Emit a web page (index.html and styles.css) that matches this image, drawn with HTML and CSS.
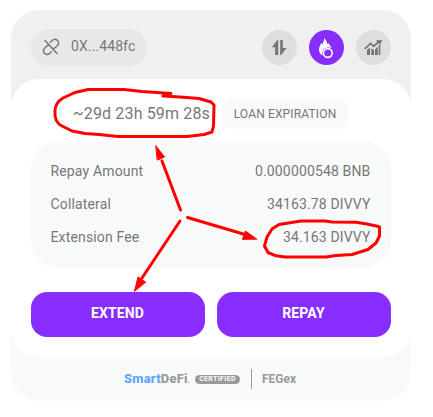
FILE: index.html
```html
<!DOCTYPE html>
<html lang="en">
<head>
<meta charset="utf-8">
<title>Loan</title>
<link rel="stylesheet" href="styles.css">
</head>
<body>
<div class="card">
  <header class="header">
    <div class="wallet">
      <svg width="18" height="18" viewBox="0 0 18 18" fill="none" stroke="#777" stroke-width="1.5" stroke-linecap="round"><path d="M3 2.5 L15 15.5"/><path d="M8.3 4.3 L10 2.7 C11.5 1.2 13.8 1 15.4 2.3 C17 3.7 16.9 6.1 15.5 7.5 L13 9.8 C12.2 10.5 11.5 10.7 10.5 10.6"/><path d="M9.4 13.7 L7.8 15.2 C6.3 16.6 4.1 16.7 2.6 15.4 C1 14 1.1 11.7 2.5 10.3 L4.8 8.1 C5.5 7.5 6.2 7.2 7.2 7.3"/></svg>
      <span>0X...448fc</span>
    </div>
    <nav class="tools">
      <a class="tool"><svg width="35" height="35" viewBox="0 0 35 35" fill="#747474"><path d="M10 17.2 L15.3 10 H16.2 V25 H13.2 V17.2Z M18.2 10 H20.8 V18 H24.5 L19.2 25 H18.2Z"/></svg></a>
      <a class="tool active"><svg width="35" height="35" viewBox="0 0 35 35" fill="#fff"><path d="M15 8 C17 10 18.2 12 18.2 14 L19.4 13.2 C20.5 14.5 21.8 16 22.4 18 C17 16 12.5 20 13.7 25.7 C11.4 24.5 10 22.3 10 19.5 C10 17 11.5 15 12.3 13 L13.3 14.3 C14.5 12 15.3 10 15 8Z"/><circle cx="18.8" cy="23" r="5.5" fill="#872eff"/><circle cx="18.8" cy="23" r="4.4" fill="none" stroke="#fff" stroke-width="1.6"/></svg></a>
      <a class="tool"><svg width="35" height="35" viewBox="0 0 35 35" fill="#747474"><path d="M11 20 L14 17.5 V25 H11Z M15.3 18.3 L18 20.3 V25 H15.3Z M19 19.5 L21.8 16.5 V25 H19Z M22.7 15.6 L24.3 14 V25 H22.7Z"/><path d="M8.8 18.8 L14.6 13.4 L17.7 16.2 L23.2 11.4" fill="none" stroke="#747474" stroke-width="1.8"/><path d="M19.8 10.2 H26.5 L24 14.6Z"/></svg></a>
    </nav>
  </header>
  <main class="panel">
    <div class="expiry"><span class="time">~29d 23h 59m 28s</span><span class="chip">LOAN EXPIRATION</span></div>
    <dl class="details">
      <div class="row"><dt>Repay Amount</dt><dd>0.000000548 BNB</dd></div>
      <div class="row"><dt>Collateral</dt><dd>34163.78 DIVVY</dd></div>
      <div class="row"><dt>Extension Fee</dt><dd>34.163 DIVVY</dd></div>
    </dl>
    <div class="actions"><button>EXTEND</button><button>REPAY</button></div>
  </main>
  <footer class="footer">
    <span class="brand"><b>Smart</b>DeFi<small>.</small></span>
    <span class="certified">CERTIFIED</span>
    <span class="divider"></span>
    <span class="fegex">FEGex</span>
  </footer>
</div>
<svg class="notes" width="433" height="417" viewBox="0 0 433 417" fill="none" stroke="#f00" stroke-width="3" stroke-linejoin="round" stroke-linecap="round">
  <path d="M171 93.500 L142 91.500 L124 89.500 H88 L75 92.500 L63 98 Q55 103 55 111 Q54 122 62 126 L72 131 L85 133.500 L99 134.500 L118 136.500 H187 L204 134.500 L212 132 L213.500 126 L214 105 L211 102 L199 98.500 L180 97 L163 96"/>
  <path d="M378.500 226.500 L367 224 L356 222.300 L332 222 L325 221 H301 L279 224.500 L272 229 L267 237 L264.500 246 L268 252.500 L276 255.800 L285 257 H326 L336 255.500 L352 254.500 L368 249.500 L376 243 L379.500 236 V227"/>
  <path d="M180.500 210 L162 161 M180 221 L142 278 M187.500 217.500 L245 234.500"/>
  <path d="M156 146 L164.500 157 L157.500 160Z M134.500 291 L138 277 L145.500 282Z M256.500 239 L245.500 231 L242.500 239Z" fill="#f00" stroke-width="1"/>
</svg>
</body>
</html>
```

FILE: styles.css
```css
* { box-sizing: border-box; }
body { margin: 0; padding: 10px 11px; background: #fff; color: #777; font-family: Roboto, sans-serif; font-size: 14px; }
.card { width: 400px; height: 391px; border-radius: 28px; overflow: hidden; background: linear-gradient(#f0f0f0 0 50%, #f8faf9 50%); }
.header { height: 69px; padding: 1px 20px 0; display: flex; align-items: center; justify-content: space-between; }
.wallet { display: flex; align-items: center; gap: 11px; width: 116px; height: 37px; margin-top: 4px; padding-left: 11px; border-radius: 18px; background: #e8e8e8; letter-spacing: .1px; }
.wallet span { padding-bottom: 2px; }
.tools { display: flex; gap: 12px; margin-top: 4px; }
.tool { width: 35px; height: 35px; border-radius: 50%; background: #dcdedf; }
.tool svg { display: block; }
.tool.active { background: #872eff; }
.panel { height: 278px; padding: 20px; border-radius: 28px; background: #fff; }
.expiry { display: flex; align-items: center; justify-content: flex-end; gap: 12px; height: 30px; padding-right: 43px; }
.time { padding-bottom: 2px; font-size: 16px; letter-spacing: .15px; }
.chip { width: 126px; height: 30px; border-radius: 10px; background: #f8faf9; font-size: 12px; line-height: 30px; text-align: center; letter-spacing: .15px; }
.details { height: 127px; margin: 12px 0 24px; padding: 13px 20.5px 15px 19.5px; border-radius: 28px; background: #f8faf9; letter-spacing: .15px; }
.row { display: flex; align-items: center; justify-content: space-between; height: 33px; }
.row dd { margin: 0; }
.actions { display: flex; gap: 12px; }
.actions button { flex: 1; height: 45px; padding: 0 1px 3px 0; border: 0; border-radius: 16px; background: #872eff; color: #fff; font: 700 14px Roboto, sans-serif; letter-spacing: .15px; }
.footer { display: flex; align-items: center; height: 44px; padding-left: 113px; color: #999; }
.brand { width: 71px; font: 800 12px Roboto, sans-serif; white-space: nowrap; letter-spacing: .2px; transform: scaleX(1.08); transform-origin: left; }
.brand b { color: #5da3f8; font-weight: 800; }
.brand small { font-size: 7px; }
.certified { width: 45px; height: 9px; border-radius: 5px; background: #999; color: #fff; font: 700 7px/9px Roboto, sans-serif; text-align: center; letter-spacing: .35px; }
.divider { width: 1px; height: 20px; margin: 0 10px 0 11px; background: #999; }
.fegex { font-size: 12px; font-weight: 700; }
.notes { position: absolute; left: 0; top: 0; pointer-events: none; }
```
